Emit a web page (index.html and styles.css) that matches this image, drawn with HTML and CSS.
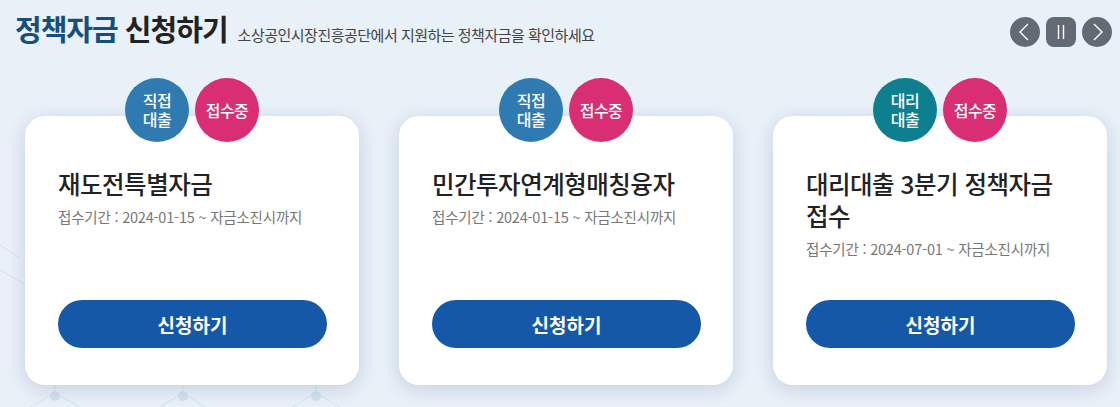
FILE: index.html
```html
<!DOCTYPE html>
<html lang="ko">
<head>
    <meta charset="UTF-8">
    <meta name="viewport" content="width=device-width, initial-scale=1.0">
    <title>정책자금 신청하기</title>
    <link rel="stylesheet" href="styles.css">
</head>
<body>
    <div class="fund-wrap">
        <!-- 상단 타이틀 -->
        <div class="fund-head">
            <h2 class="fund-title">
                <strong><em>정책자금</em> 신청하기</strong>
                <span>소상공인시장진흥공단에서 지원하는 정책자금을 확인하세요</span>
            </h2>
            <div class="fund-ctrl">
                <button class="ctrl-btn prev" type="button" aria-label="이전">
                    <svg width="30" height="30" viewBox="0 0 30 30"><path d="M18 7 L10 15 L18 23" fill="none" stroke="#fff" stroke-width="1.4"/></svg>
                </button>
                <button class="ctrl-btn pause" type="button" aria-label="정지">
                    <svg width="30" height="30" viewBox="0 0 30 30"><path d="M12.5 8 V22 M17.5 8 V22" fill="none" stroke="#fff" stroke-width="1.4"/></svg>
                </button>
                <button class="ctrl-btn next" type="button" aria-label="다음">
                    <svg width="30" height="30" viewBox="0 0 30 30"><path d="M12 7 L20 15 L12 23" fill="none" stroke="#fff" stroke-width="1.4"/></svg>
                </button>
            </div>
        </div>

        <!-- 자금 카드 -->
        <ul class="fund-list">
            <li class="fund-item">
                <div class="badges">
                    <span class="badge direct">직접<br>대출</span>
                    <span class="badge state">접수중</span>
                </div>
                <div class="fund-card">
                    <h3>재도전특별자금</h3>
                    <p class="period">접수기간 : 2024-01-15 ~ 자금소진시까지</p>
                    <a href="#" class="apply-btn">신청하기</a>
                </div>
            </li>
            <li class="fund-item">
                <div class="badges">
                    <span class="badge direct">직접<br>대출</span>
                    <span class="badge state">접수중</span>
                </div>
                <div class="fund-card">
                    <h3>민간투자연계형매칭융자</h3>
                    <p class="period">접수기간 : 2024-01-15 ~ 자금소진시까지</p>
                    <a href="#" class="apply-btn">신청하기</a>
                </div>
            </li>
            <li class="fund-item">
                <div class="badges">
                    <span class="badge agency">대리<br>대출</span>
                    <span class="badge state">접수중</span>
                </div>
                <div class="fund-card">
                    <h3>대리대출 3분기 정책자금 접수</h3>
                    <p class="period">접수기간 : 2024-07-01 ~ 자금소진시까지</p>
                    <a href="#" class="apply-btn">신청하기</a>
                </div>
            </li>
        </ul>
    </div>
</body>
</html>
```

FILE: styles.css
```css
* {
    box-sizing: border-box;
    margin: 0;
    padding: 0;
}

body {
    font-family: "Noto Sans CJK KR", "Noto Sans", sans-serif;
    background-color: #e8f0f8;
    background-image: url("data:image/svg+xml;utf8,<svg xmlns='http://www.w3.org/2000/svg' width='1120' height='407'><g stroke='%23d3e2ee' stroke-width='1' fill='none'><path d='M0 270 L26 285'/><path d='M0 245 L20 258'/><path d='M30 407 L55 393 L80 407'/><path d='M160 407 L183 393 L206 407'/><path d='M292 407 L316 393 L340 407'/><path d='M55 393 V385 M183 393 V385 M316 393 V385'/></g><g fill='%23d0e1ec'><circle cx='55' cy='396' r='5'/><circle cx='183' cy='396' r='5'/><circle cx='316' cy='396' r='5'/></g></svg>");
    background-repeat: no-repeat;
    color: #222;
    min-height: 100vh;
}

.fund-wrap {
    width: 1120px;
}

/* 타이틀 */
.fund-head {
    display: flex;
    justify-content: space-between;
    align-items: flex-start;
    padding: 8px 8px 0 15px;
}

.fund-title {
    display: flex;
    align-items: baseline;
    gap: 10px;
    font-weight: normal;
}

.fund-title strong {
    font-size: 29px;
    font-weight: 700;
    letter-spacing: -1px;
    color: #222;
    line-height: 40px;
}

.fund-title em {
    font-style: normal;
    color: #174f7c;
}

.fund-title span {
    font-size: 15px;
    letter-spacing: -0.5px;
    color: #444;
}

.fund-ctrl {
    display: flex;
    gap: 6px;
    margin-top: 9px;
}

.ctrl-btn {
    width: 30px;
    height: 30px;
    border: none;
    border-radius: 50%;
    background: #626b75;
    display: flex;
    align-items: center;
    justify-content: center;
    cursor: pointer;
}

.ctrl-btn.pause {
    border-radius: 8px;
}

/* 카드 목록 */
.fund-list {
    list-style: none;
    display: grid;
    grid-template-columns: repeat(3, 334px);
    gap: 40px;
    padding-left: 25px;
    margin-top: 30px;
}

.fund-item {
    display: flex;
    flex-direction: column;
}

.badges {
    display: flex;
    justify-content: center;
    gap: 6px;
    margin-bottom: -26px;
    position: relative;
    z-index: 1;
}

.badge {
    width: 64px;
    height: 64px;
    border-radius: 50%;
    display: flex;
    align-items: center;
    justify-content: center;
    text-align: center;
    color: #fff;
    font-size: 16px;
    font-weight: 500;
    line-height: 19px;
    letter-spacing: -0.5px;
}

.badge.direct {
    background: #2f7bb1;
}

.badge.agency {
    background: #0d7f8f;
}

.badge.state {
    background: #d92d74;
}

.fund-card {
    height: 269px;
    background: #fff;
    border-radius: 20px;
    box-shadow: 0 4px 18px rgba(40, 70, 110, 0.18);
    padding: 52px 28px 37px 33px;
    display: flex;
    flex-direction: column;
}

.fund-card h3 {
    font-size: 24.5px;
    font-weight: 500;
    line-height: 32px;
    letter-spacing: -0.5px;
    color: #222;
    word-break: keep-all;
}

.period {
    margin-top: 6px;
    font-size: 14.5px;
    line-height: 22px;
    letter-spacing: -0.2px;
    color: #777;
}

.apply-btn {
    margin-top: auto;
    margin-right: 4px;
    height: 48px;
    border-radius: 24px;
    background: #1558a8;
    color: #fff;
    font-size: 19px;
    font-weight: 700;
    text-decoration: none;
    display: flex;
    align-items: center;
    justify-content: center;
}
```
